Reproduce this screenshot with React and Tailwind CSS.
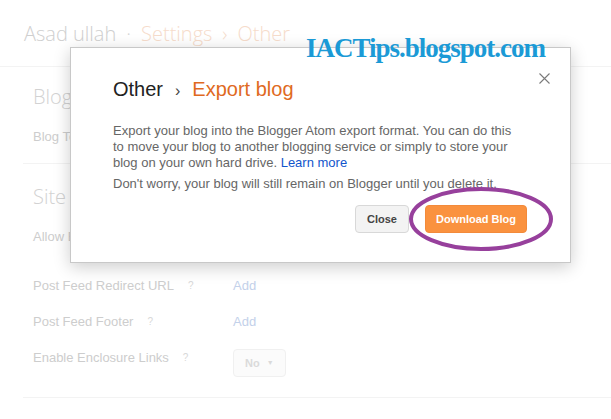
import React from "react";

function Row({ label, help, children, helpGap = "ml-[14px]" }) {
  return (
    <div className="flex items-start">
      <div className="w-[200px] flex items-center text-[13px] leading-4 text-[#cdcdcd]">
        <span>{label}</span>
        <span className={`${helpGap} text-[10px] text-[#d8d8d8]`}>{help}</span>
      </div>
      {children}
    </div>
  );
}

export default function App() {
  return (
    <div className="relative w-[611px] h-[419px] overflow-hidden bg-white font-['Liberation_Sans',Arial,sans-serif]">
      {/* faded page behind the dialog */}
      <div className="h-[67px] border-b border-[#f3f3f3] pl-6 pt-[20px] font-['Open_Sans',sans-serif] font-light text-[20px] leading-7 flex items-baseline">
        <span className="text-[#cfcfcf]">Asad ullah</span>
        <span className="mx-[10px] text-[#d6d6d6]">·</span>
        <span className="text-[#f6dccb]">Settings</span>
        <span className="mx-[10px] text-[#f6dccb]">›</span>
        <span className="text-[#f6dccb]">Other</span>
      </div>

      <div className="ml-[23px] border-b border-[#f3f3f3] pl-[10px] pt-[16px] pb-[18px]">
        <div className="font-['Open_Sans',sans-serif] font-light text-[20px] leading-7 text-[#d2d2d2]">Blog</div>
        <div className="mt-[18px] text-[13px] leading-4 text-[#cdcdcd]">Blog Tools</div>
      </div>

      <div className="ml-[23px] border-b border-[#f3f3f3] pl-[10px] pt-[19px] pb-[20px]">
        <div className="font-['Open_Sans',sans-serif] font-light text-[20px] leading-7 text-[#d2d2d2]">Site feed</div>
        <div className="mt-[18px] text-[13px] leading-4 text-[#cdcdcd]">Allow Blog Feed</div>
        <div className="mt-[33px]">
          <Row label="Post Feed Redirect URL" help="?">
            <span className="text-[13px] leading-4 text-[#c3d1ea]">Add</span>
          </Row>
        </div>
        <div className="mt-[20px]">
          <Row label="Post Feed Footer" help="?">
            <span className="text-[13px] leading-4 text-[#c3d1ea]">Add</span>
          </Row>
        </div>
        <div className="mt-[20px]">
          <Row label="Enable Enclosure Links" help="?">
            <div className="-mt-px h-[28px] w-[53px] rounded-sm border border-[#f0f0f0] bg-[#fbfbfb] flex items-center pl-[11px] gap-[7px] text-[11px] font-bold text-[#dadada]">
              <span>No</span>
              <span className="text-[7px]">▼</span>
            </div>
          </Row>
        </div>
      </div>

      {/* dialog */}
      <div className="absolute left-[70px] top-[47px] w-[501px] h-[216px] bg-white border border-[#c8c8c8] shadow-[0_4px_16px_rgba(0,0,0,0.2)] pl-[42px] pr-[43px] pt-[29px]">
        <button className="absolute right-[20px] top-[24px] w-[12px] h-[12px] flex items-center justify-center">
          <svg width="11" height="11" viewBox="0 0 11 11">
            <path d="M0.5 0.5 L10.5 10.5 M10.5 0.5 L0.5 10.5" stroke="#7a7a7a" strokeWidth="1.1" fill="none" />
          </svg>
        </button>
        <div className="flex items-baseline text-[20px] leading-6">
          <span className="text-[#222]">Other</span>
          <span className="mx-[12px] text-[16px] text-[#444]">›</span>
          <span className="text-[#e06a1f]">Export blog</span>
        </div>
        <p className="mt-[20px] w-[410px] text-[13px] leading-4 text-[#666]">
          Export your blog into the Blogger Atom export format. You can do this to move your blog to another blogging service or simply to store your blog on your own hard drive. <span className="text-[#15c]">Learn more</span>
        </p>
        <p className="mt-[5px] text-[13px] leading-4 text-[#666]">
          Don't worry, your blog will still remain on Blogger until you delete it.
        </p>
        <div className="mt-[13px] flex justify-end gap-[16px]">
          <button className="h-[28px] w-[54px] rounded-sm border border-[#d8d8d8] bg-[#f3f3f3] text-[11px] font-bold text-[#444]">
            Close
          </button>
          <button className="h-[28px] w-[102px] rounded-sm border border-[#f38a3a] bg-[#fa923f] text-[11px] font-bold text-white">
            Download Blog
          </button>
        </div>
      </div>

      {/* watermark */}
      <div className="absolute z-10 left-[306px] top-[35px] font-['Liberation_Serif',serif] font-bold text-[27px] leading-none tracking-[-1px] text-[#1b9ad6]">
        IACTips.blogspot.com
      </div>

      {/* highlight ring */}
      <svg className="absolute z-10 left-[408px] top-[186px]" width="146" height="66" viewBox="0 0 146 66">
        <ellipse cx="73" cy="33" rx="70" ry="30" fill="none" stroke="#97409c" strokeWidth="4" />
      </svg>
    </div>
  );
}
